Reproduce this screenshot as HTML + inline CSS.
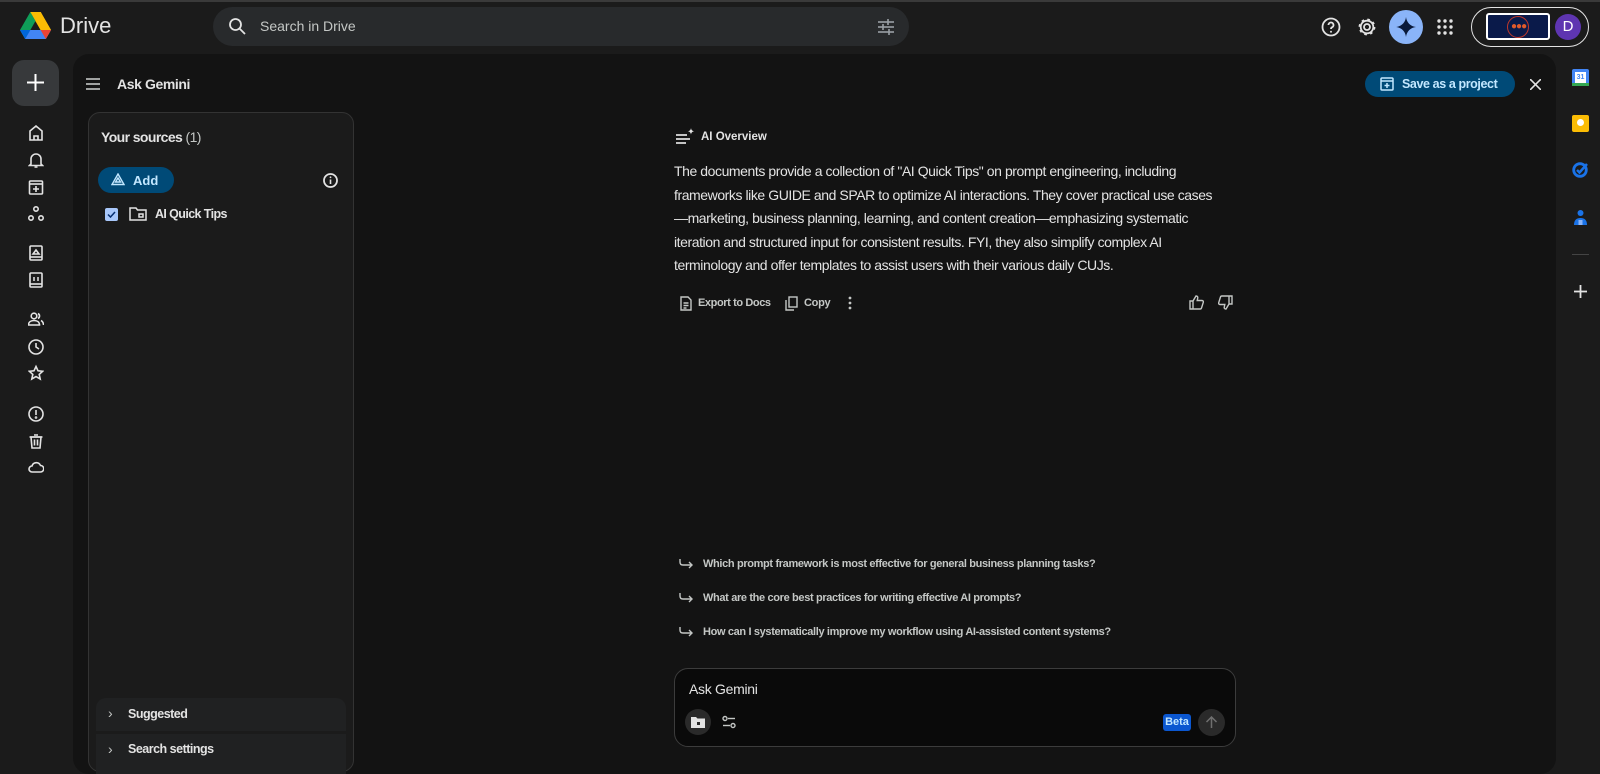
<!DOCTYPE html>
<html><head><meta charset="utf-8"><style>
*{box-sizing:border-box;margin:0;padding:0}
body{width:1600px;height:760px;overflow:hidden;background:#1b1b1b;font-family:"Liberation Sans",Arial,sans-serif;color:#e3e3e3;position:relative}
.a{position:absolute}
svg{display:block}
.ic{stroke:#e3e3e3;fill:none;stroke-width:1.8}
.sug{font-size:11px;font-weight:bold;color:#c4c7c5;letter-spacing:-0.35px}
</style></head><body>
<div class="a" style="left:0;top:0;width:1600px;height:2px;background:#3a3a3a"></div>
<!-- logo -->
<svg class="a" style="left:20px;top:12px" width="31" height="28" viewBox="0 0 31 28">
<polygon points="10.3,0 20.7,0 31,18 25.8,27 " fill="#fbbc04"/>
<polygon points="10.3,0 20.7,0 31,18 20.6,18" fill="#fbbc04"/>
<polygon points="10.3,0 15.5,9 5.2,27 0,18" fill="#0f9d58"/>
<polygon points="0,18 31,18 25.8,27 5.2,27" fill="#4285f4"/>
<polygon points="20.6,18 31,18 25.8,27" fill="#ea4335"/>
<polygon points="0,18 10.4,18 5.2,27" fill="#0066da"/>
</svg>
<div class="a" style="left:60px;top:13px;font-size:22px;color:#e3e3e3">Drive</div>
<!-- search -->
<div class="a" style="left:213px;top:7px;width:696px;height:39px;border-radius:20px;background:#282a2c"></div>
<svg class="a" style="left:228px;top:17px" width="19" height="19" viewBox="0 0 19 19"><circle cx="7.5" cy="7.5" r="5.5" class="ic" stroke-width="2"/><line x1="11.5" y1="11.5" x2="17" y2="17" class="ic" stroke-width="2"/></svg>
<div class="a" style="left:260px;top:18px;font-size:14px;color:#c4c7c5">Search in Drive</div>
<svg class="a" style="left:877px;top:18px" width="18" height="18" viewBox="0 0 18 18" stroke="#9aa0a6" stroke-width="1.6"><line x1="1" y1="4" x2="17" y2="4"/><line x1="1" y1="9" x2="17" y2="9"/><line x1="1" y1="14" x2="17" y2="14"/><line x1="11" y1="1" x2="11" y2="7"/><line x1="6" y1="6" x2="6" y2="12"/><line x1="12" y1="11" x2="12" y2="17"/></svg>
<!-- top right -->
<svg class="a" style="left:1321px;top:17px" width="20" height="20" viewBox="0 0 20 20"><circle cx="10" cy="10" r="8.5" class="ic"/><path d="M7.5 8a2.5 2.5 0 1 1 3.5 2.3c-.8.4-1 .9-1 1.7" class="ic"/><circle cx="10" cy="14.8" r="1" fill="#e3e3e3"/></svg>
<svg class="a" style="left:1357px;top:17px" width="20" height="20" viewBox="0 0 20 20"><circle cx="10" cy="10" r="3" class="ic"/><circle cx="10" cy="10" r="6.3" class="ic" stroke-width="1.8"/><circle cx="10" cy="10" r="7.5" class="ic" stroke-dasharray="2.6 3.3" stroke-width="3"/></svg>
<div class="a" style="left:1389px;top:10px;width:34px;height:34px;border-radius:50%;background:#8ab4f8"></div>
<svg class="a" style="left:1396px;top:17px" width="20" height="20" viewBox="0 0 20 20"><path d="M10 0C10.6 5.5 14.5 9.4 20 10 14.5 10.6 10.6 14.5 10 20 9.4 14.5 5.5 10.6 0 10 5.5 9.4 9.4 5.5 10 0Z" fill="#0a1a3a"/></svg>
<svg class="a" style="left:1437px;top:19px" width="16" height="16" viewBox="0 0 16 16" fill="#e3e3e3"><circle cx="2" cy="2" r="1.7"/><circle cx="8" cy="2" r="1.7"/><circle cx="14" cy="2" r="1.7"/><circle cx="2" cy="8" r="1.7"/><circle cx="8" cy="8" r="1.7"/><circle cx="14" cy="8" r="1.7"/><circle cx="2" cy="14" r="1.7"/><circle cx="8" cy="14" r="1.7"/><circle cx="14" cy="14" r="1.7"/></svg>
<div class="a" style="left:1471px;top:7px;width:118px;height:40px;border-radius:20px;border:1.5px solid #e3e3e3"></div>
<div class="a" style="left:1486px;top:13px;width:64px;height:27px;border:2px solid #fff;border-radius:3px;background:#0a1a4a"></div>
<div class="a" style="left:1507px;top:16px;width:22px;height:22px;border:1px solid #c0392b;border-radius:50%"></div>
<div class="a" style="left:1511px;top:23px;font-size:10px;color:#e05a2b;letter-spacing:-1px;line-height:8px">●●●</div>
<div class="a" style="left:1555px;top:14px;width:26px;height:26px;border-radius:50%;background:#5e35b1;color:#fff;font-size:15px;text-align:center;line-height:26px">D</div>
<!-- left rail -->
<div class="a" style="left:12px;top:60px;width:47px;height:46px;border-radius:12px;background:#37393b"></div>
<svg class="a" style="left:27px;top:74px" width="17" height="17" viewBox="0 0 17 17"><line x1="8.5" y1="0" x2="8.5" y2="17" stroke="#fff" stroke-width="2"/><line x1="0" y1="8.5" x2="17" y2="8.5" stroke="#fff" stroke-width="2"/></svg>
<svg class="a" style="left:28px;top:125px" width="16" height="360" viewBox="0 0 16 360" stroke="#e3e3e3" fill="none" stroke-width="1.6">
<path d="M2 15V6L8 1l6 5v9Z"/><path d="M6 15v-4h4v4"/>
<g transform="translate(0,27)"><path d="M3 12V7a5 5 0 0 1 10 0v5l1.5 1.5h-13Z"/><path d="M6.5 15h3"/></g>
<g transform="translate(0,54)"><rect x="1.5" y="2" width="13" height="13" rx="1"/><line x1="1.5" y1="5" x2="14.5" y2="5"/><path d="M8 7v6M5 10h6"/></g>
<g transform="translate(0,81)"><circle cx="8" cy="3" r="2.2"/><circle cx="3" cy="12" r="2.2"/><circle cx="13" cy="12" r="2.2"/></g>
<g transform="translate(0,120)"><rect x="2" y="1" width="12" height="14" rx="1"/><path d="M5 9l3-4 3 4Z"/><line x1="2" y1="12" x2="14" y2="12"/></g>
<g transform="translate(0,147)"><rect x="2" y="1" width="12" height="14" rx="1"/><path d="M5 8h2M9 8h2M5 6h2M9 6h2"/><line x1="2" y1="12" x2="14" y2="12"/></g>
<g transform="translate(0,186)"><circle cx="6" cy="5" r="2.8"/><path d="M0.5 14c0-3 2.5-4.5 5.5-4.5S11.5 11 11.5 14Z"/><path d="M10 2.5a2.8 2.8 0 0 1 0 5M13 9.5c1.5.8 2.5 2 2.5 4.5"/></g>
<g transform="translate(0,214)"><circle cx="8" cy="8" r="7"/><path d="M8 4v4l3 2"/></g>
<g transform="translate(0,240)"><path d="M8 1.5l2 4.3 4.6.5-3.4 3.1 1 4.6L8 11.6 3.8 14l1-4.6L1.4 6.3l4.6-.5Z"/></g>
<g transform="translate(0,281)"><circle cx="8" cy="8" r="7"/><path d="M8 4v5"/><circle cx="8" cy="11.5" r=".5"/></g>
<g transform="translate(0,308)"><path d="M3 4h10l-1 11H4Z"/><path d="M1.5 4h13M6 2h4M6.5 6.5v6M9.5 6.5v6"/></g>
<g transform="translate(0,334)"><path d="M4 13a3 3 0 0 1 0-6 4.5 4.5 0 0 1 8.5-.5A3.2 3.2 0 0 1 12.5 13Z"/></g>
</svg>
<!-- main panel -->
<div class="a" style="left:73px;top:54px;width:1483px;height:720px;border-radius:16px;background:#131313"></div>
<svg class="a" style="left:86px;top:78px" width="14" height="12" viewBox="0 0 14 12" stroke="#c4c7c5" stroke-width="1.6"><line x1="0" y1="1" x2="14" y2="1"/><line x1="0" y1="6" x2="14" y2="6"/><line x1="0" y1="11" x2="14" y2="11"/></svg>
<div class="a" style="left:117px;top:76px;font-size:14px;font-weight:bold;color:#e3e3e3;letter-spacing:-0.4px">Ask Gemini</div>
<div class="a" style="left:1365px;top:71px;width:150px;height:26px;border-radius:13px;background:#004a77"></div>
<svg class="a" style="left:1380px;top:77px" width="14" height="14" viewBox="0 0 14 14" stroke="#c2e7ff" fill="none" stroke-width="1.5"><rect x="1" y="1" width="12" height="12" rx="1"/><line x1="1" y1="4" x2="13" y2="4"/><path d="M7 6v5M4.5 8.5h5"/></svg>
<div class="a" style="left:1402px;top:77px;font-size:12.5px;font-weight:bold;color:#c2e7ff;letter-spacing:-0.4px">Save as a project</div>
<svg class="a" style="left:1530px;top:79px" width="11" height="11" viewBox="0 0 11 11" stroke="#e3e3e3" stroke-width="1.6"><line x1="0" y1="0" x2="11" y2="11"/><line x1="11" y1="0" x2="0" y2="11"/></svg>
<!-- sources -->
<div class="a" style="left:88px;top:112px;width:266px;height:660px;border-radius:12px;background:#1b1b1b;border:1px solid #333"></div>
<div class="a" style="left:101px;top:129px;font-size:14px;font-weight:bold;color:#e3e3e3;letter-spacing:-0.6px">Your sources <span style="font-weight:normal;color:#c4c7c5">(1)</span></div>
<div class="a" style="left:98px;top:167px;width:76px;height:26px;border-radius:13px;background:#004a77"></div>
<svg class="a" style="left:111px;top:173px" width="14" height="13" viewBox="0 0 14 13" stroke="#c2e7ff" fill="none" stroke-width="1.4"><path d="M7 1L13 11.5H1Z"/><path d="M7 5l2.5 4h-5Z"/></svg>
<div class="a" style="left:133px;top:173px;font-size:13px;font-weight:bold;color:#c2e7ff">Add</div>
<svg class="a" style="left:323px;top:173px" width="15" height="15" viewBox="0 0 15 15"><circle cx="7.5" cy="7.5" r="6.5" class="ic" stroke-width="1.4"/><line x1="7.5" y1="6.5" x2="7.5" y2="11" stroke="#e3e3e3" stroke-width="1.6"/><circle cx="7.5" cy="4.3" r=".9" fill="#e3e3e3"/></svg>
<div class="a" style="left:105px;top:208px;width:13px;height:13px;border-radius:2px;background:#a8c7fa"></div>
<svg class="a" style="left:107px;top:211px" width="9" height="7" viewBox="0 0 9 7" stroke="#062e6f" fill="none" stroke-width="1.5"><path d="M1 3.5l2.5 2.5L8 1"/></svg>
<svg class="a" style="left:129px;top:206px" width="18" height="15" viewBox="0 0 18 15" stroke="#e3e3e3" fill="none" stroke-width="1.5"><path d="M1 2h6l1.5 2H17v10H1Z"/><rect x="10" y="8" width="4" height="3"/></svg>
<div class="a" style="left:155px;top:207px;font-size:12.5px;font-weight:bold;color:#e3e3e3;letter-spacing:-0.6px">AI Quick Tips</div>
<div class="a" style="left:96px;top:698px;width:250px;height:33px;border-radius:10px 10px 0 0;background:#202122"></div>
<div class="a" style="left:96px;top:734px;width:250px;height:40px;background:#202122"></div>
<div class="a" style="left:108px;top:705px;font-size:14px;color:#c4c7c5">›</div>
<div class="a" style="left:128px;top:707px;font-size:12.5px;font-weight:bold;color:#e3e3e3;letter-spacing:-0.5px">Suggested</div>
<div class="a" style="left:108px;top:741px;font-size:14px;color:#c4c7c5">›</div>
<div class="a" style="left:128px;top:742px;font-size:12.5px;font-weight:bold;color:#e3e3e3;letter-spacing:-0.5px">Search settings</div>
<!-- AI overview -->
<svg class="a" style="left:676px;top:128px" width="19" height="17" viewBox="0 0 19 17" stroke="#e3e3e3" stroke-width="1.7"><line x1="0" y1="7" x2="11" y2="7"/><line x1="0" y1="11" x2="14" y2="11"/><line x1="0" y1="15" x2="10" y2="15"/><path d="M15 0c.3 2 1.3 3 3.3 3.3-2 .3-3 1.3-3.3 3.3-.3-2-1.3-3-3.3-3.3 2-.3 3-1.3 3.3-3.3Z" fill="#e3e3e3" stroke="none"/></svg>
<div class="a" style="left:701px;top:131px;font-size:11.5px;font-weight:bold;color:#e3e3e3">AI Overview</div>
<div class="a" style="left:674px;top:160px;width:580px;font-size:14px;line-height:23.5px;color:#e3e3e3;letter-spacing:-0.43px">The documents provide a collection of "AI Quick Tips" on prompt engineering, including<br>frameworks like GUIDE and SPAR to optimize AI interactions. They cover practical use cases<br>—marketing, business planning, learning, and content creation—emphasizing systematic<br>iteration and structured input for consistent results. FYI, they also simplify complex AI<br>terminology and offer templates to assist users with their various daily CUJs.</div>
<svg class="a" style="left:680px;top:296px" width="12" height="15" viewBox="0 0 12 15" stroke="#c4c7c5" fill="none" stroke-width="1.4"><path d="M1 1h7l3 3v10H1Z"/><path d="M3.5 7h5M3.5 9.5h5M3.5 12h3"/></svg>
<div class="a" style="left:698px;top:297px;font-size:11px;font-weight:bold;color:#c4c7c5;letter-spacing:-0.4px">Export to Docs</div>
<svg class="a" style="left:785px;top:296px" width="13" height="15" viewBox="0 0 13 15" stroke="#c4c7c5" fill="none" stroke-width="1.4"><rect x="4" y="1" width="8" height="10"/><path d="M1 4v10h8"/></svg>
<div class="a" style="left:804px;top:297px;font-size:11px;font-weight:bold;color:#c4c7c5;letter-spacing:-0.3px">Copy</div>
<svg class="a" style="left:848px;top:296px" width="4" height="14" viewBox="0 0 4 14" fill="#c4c7c5"><circle cx="2" cy="2" r="1.4"/><circle cx="2" cy="7" r="1.4"/><circle cx="2" cy="12" r="1.4"/></svg>
<svg class="a" style="left:1189px;top:295px" width="15" height="15" viewBox="0 0 15 15" stroke="#c4c7c5" fill="none" stroke-width="1.4"><path d="M1 6h3v8H1ZM4 6l3-5c1.5 0 2 1 1.7 2.2L8.2 5.5H13c1 0 1.6.8 1.3 1.8l-1.8 5.7c-.2.6-.7 1-1.3 1H4"/></svg>
<svg class="a" style="left:1218px;top:295px" width="15" height="15" viewBox="0 0 15 15" stroke="#c4c7c5" fill="none" stroke-width="1.4"><g transform="rotate(180 7.5 7.5)"><path d="M1 6h3v8H1ZM4 6l3-5c1.5 0 2 1 1.7 2.2L8.2 5.5H13c1 0 1.6.8 1.3 1.8l-1.8 5.7c-.2.6-.7 1-1.3 1H4"/></g></svg>
<!-- suggestions -->
<svg class="a" style="left:679px;top:558px" width="14" height="12" viewBox="0 0 14 12" stroke="#c4c7c5" fill="none" stroke-width="1.4"><path d="M1 1v3c0 2 1 3 3 3h9M10 4l3 3-3 3"/></svg>
<div class="a sug" style="left:703px;top:558px">Which prompt framework is most effective for general business planning tasks?</div>
<svg class="a" style="left:679px;top:592px" width="14" height="12" viewBox="0 0 14 12" stroke="#c4c7c5" fill="none" stroke-width="1.4"><path d="M1 1v3c0 2 1 3 3 3h9M10 4l3 3-3 3"/></svg>
<div class="a sug" style="left:703px;top:592px">What are the core best practices for writing effective AI prompts?</div>
<svg class="a" style="left:679px;top:626px" width="14" height="12" viewBox="0 0 14 12" stroke="#c4c7c5" fill="none" stroke-width="1.4"><path d="M1 1v3c0 2 1 3 3 3h9M10 4l3 3-3 3"/></svg>
<div class="a sug" style="left:703px;top:626px">How can I systematically improve my workflow using AI-assisted content systems?</div>
<!-- input -->
<div class="a" style="left:674px;top:668px;width:562px;height:79px;border-radius:14px;background:#0a0a0a;border:1px solid #3c3c3c"></div>
<div class="a" style="left:689px;top:681px;font-size:14px;color:#e3e3e3;letter-spacing:-0.3px">Ask Gemini</div>
<div class="a" style="left:685px;top:709px;width:26px;height:26px;border-radius:50%;background:#2a2a2a"></div>
<svg class="a" style="left:691px;top:716px" width="14" height="12" viewBox="0 0 14 12"><path d="M0 1h5l1.5 1.5H14V12H0Z" fill="#e3e3e3"/><rect x="6" y="6" width="3" height="3" fill="#2a2a2a"/></svg>
<svg class="a" style="left:722px;top:715px" width="14" height="14" viewBox="0 0 14 14" stroke="#c4c7c5" fill="none" stroke-width="1.4"><circle cx="3" cy="3.5" r="2"/><line x1="6" y1="3.5" x2="13" y2="3.5"/><circle cx="11" cy="10.5" r="2"/><line x1="1" y1="10.5" x2="8" y2="10.5"/></svg>
<div class="a" style="left:1163px;top:714px;width:28px;height:17px;border-radius:3px;background:#0b57d0;font-size:11px;font-weight:bold;color:#c2e7ff;text-align:center;line-height:17px">Beta</div>
<div class="a" style="left:1198px;top:709px;width:27px;height:27px;border-radius:50%;background:#2a2a2a"></div>
<svg class="a" style="left:1205px;top:716px" width="13" height="13" viewBox="0 0 13 13" stroke="#6f6f6f" fill="none" stroke-width="1.5"><path d="M6.5 12V1M1.5 6l5-5 5 5"/></svg>
<!-- right rail -->
<div class="a" style="left:1572px;top:69px;width:17px;height:17px;border-radius:2px;background:#4285f4"></div>
<div class="a" style="left:1575px;top:72px;width:11px;height:11px;background:#fff;font-size:7px;color:#4285f4;text-align:center;line-height:11px;font-weight:bold">31</div>
<div class="a" style="left:1572px;top:83px;width:17px;height:3px;background:#34a853"></div>
<div class="a" style="left:1572px;top:115px;width:17px;height:17px;border-radius:2px;background:#fbbc04"></div>
<div class="a" style="left:1577px;top:119px;width:7px;height:7px;border-radius:50%;background:#fff"></div>
<svg class="a" style="left:1572px;top:161px" width="17" height="17" viewBox="0 0 17 17"><circle cx="8" cy="9" r="6.3" stroke="#1a73e8" stroke-width="2.8" fill="none"/><path d="M5 9l2.5 2.5L15 3" stroke="#1a73e8" stroke-width="2.5" fill="none"/></svg>
<svg class="a" style="left:1573px;top:209px" width="15" height="17" viewBox="0 0 15 17"><circle cx="7.5" cy="4" r="3" fill="#1a73e8"/><path d="M1 16c0-5 2.5-7 6.5-7s6.5 2 6.5 7Z" fill="#1a73e8"/><rect x="5.5" y="11" width="4" height="5" fill="#8ab4f8"/></svg>
<div class="a" style="left:1572px;top:254px;width:17px;height:1px;background:#444"></div>
<svg class="a" style="left:1574px;top:285px" width="13" height="13" viewBox="0 0 13 13" stroke="#e3e3e3" stroke-width="1.8"><line x1="6.5" y1="0" x2="6.5" y2="13"/><line x1="0" y1="6.5" x2="13" y2="6.5"/></svg>
</body></html>
